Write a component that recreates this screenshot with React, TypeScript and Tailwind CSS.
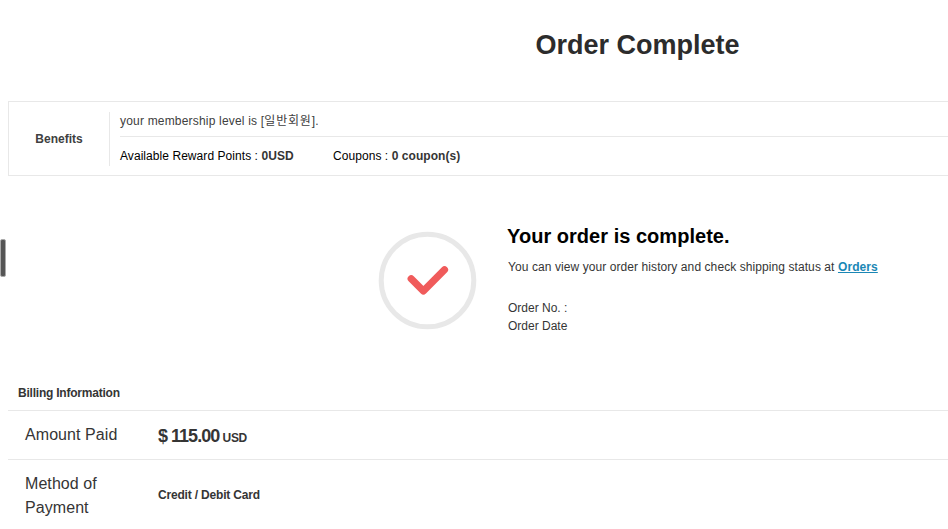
const orderRows = ['Order No. :', 'Order Date'];

function Benefits() {
  return (
    <section className="mt-[36px] flex h-[75px] items-center border border-[#e8e8e8]">
      <h2 className="w-[100px] shrink-0 text-center font-bold text-[#404040]">Benefits</h2>
      <div className="flex h-[54px] grow border-l border-[#e8e8e8] pl-[10px]">
        <div className="grow">
          <p className="h-[25px] border-b border-[#e8e8e8] leading-[18px] tracking-[0.19px] text-[#404040]">
            your membership level is [<span className="tracking-[0.8px]">일반회원</span>].
          </p>
          <div className="flex pt-[10px] leading-[18px] text-black">
            <p className="w-[213px] tracking-[0.06px]">
              Available Reward Points : <strong className="text-[#353535]">0USD</strong>
            </p>
            <p className="tracking-[0.06px]">
              Coupons : <strong className="text-[#353535]">0 coupon(s)</strong>
            </p>
          </div>
        </div>
      </div>
    </section>
  );
}

function Confirmation() {
  return (
    <section className="flex pt-[50px] pl-[370px]">
      <svg className="mt-[5px] size-[100px] shrink-0" viewBox="0 0 100 100" fill="none">
        <circle cx="49.5" cy="49.5" r="46.3" stroke="#e8e8e8" strokeWidth="5" />
        <path d="M33.2 47.8L45.4 60L66.5 38.8" stroke="#f05b5b" strokeWidth="7.2" strokeLinecap="round" strokeLinejoin="round" />
      </svg>
      <div className="pl-[30px]">
        <h2 className="-ml-px text-[20px] leading-[20px] font-bold tracking-[0.03px] text-black">Your order is complete.</h2>
        <p className="mt-3 leading-[18px] tracking-[0.08px]">
          You can view your order history and check shipping status at{' '}
          <a href="#" className="font-bold text-[#1b87b5] underline">Orders</a>
        </p>
        <ul className="mt-[23px] leading-[18px]">
          {orderRows.map((row) => (
            <li key={row}>{row}</li>
          ))}
        </ul>
      </div>
    </section>
  );
}

function Billing() {
  return (
    <section className="mt-[49px]">
      <h3 className="pl-[10px] leading-[18px] font-bold tracking-[-0.22px]">Billing Information</h3>
      <dl className="mt-[8px]">
        <div className="flex h-[49px] items-center border-t border-[#e8e8e8]">
          <dt className="w-[150px] pl-[17px] text-[16px] leading-[24px] tracking-[0.07px]">Amount Paid</dt>
          <dd className="pt-[2px] font-bold">
            <span className="text-[18px] tracking-[-0.98px]">$ 115.00</span>{' '}
            <span className="tracking-[-0.35px]">USD</span>
          </dd>
        </div>
        <div className="flex h-[72px] items-center border-t border-[#e8e8e8]">
          <dt className="w-[150px] pr-8 pl-[17px] text-[16px] leading-[24px] tracking-[0.07px]">Method of Payment</dt>
          <dd className="-mt-[2px] font-bold tracking-[-0.18px]">Credit / Debit Card</dd>
        </div>
      </dl>
    </section>
  );
}

export default function App() {
  return (
    <div className="relative h-[529px] w-full overflow-hidden bg-white font-['Liberation_Sans','Noto_Sans_CJK_KR',sans-serif] text-[12px] text-[#353535]">
      <div className="absolute top-[239px] left-0 h-[38px] w-[6px] rounded-[2px] border border-[#aaa] bg-[#555]" />
      <main className="ml-2 w-[1260px] pt-[25px]">
        <h1 className="-ml-px text-center text-[27px] leading-[40px] font-bold text-[#2c2c2c]">Order Complete</h1>
        <Benefits />
        <Confirmation />
        <Billing />
      </main>
    </div>
  );
}
